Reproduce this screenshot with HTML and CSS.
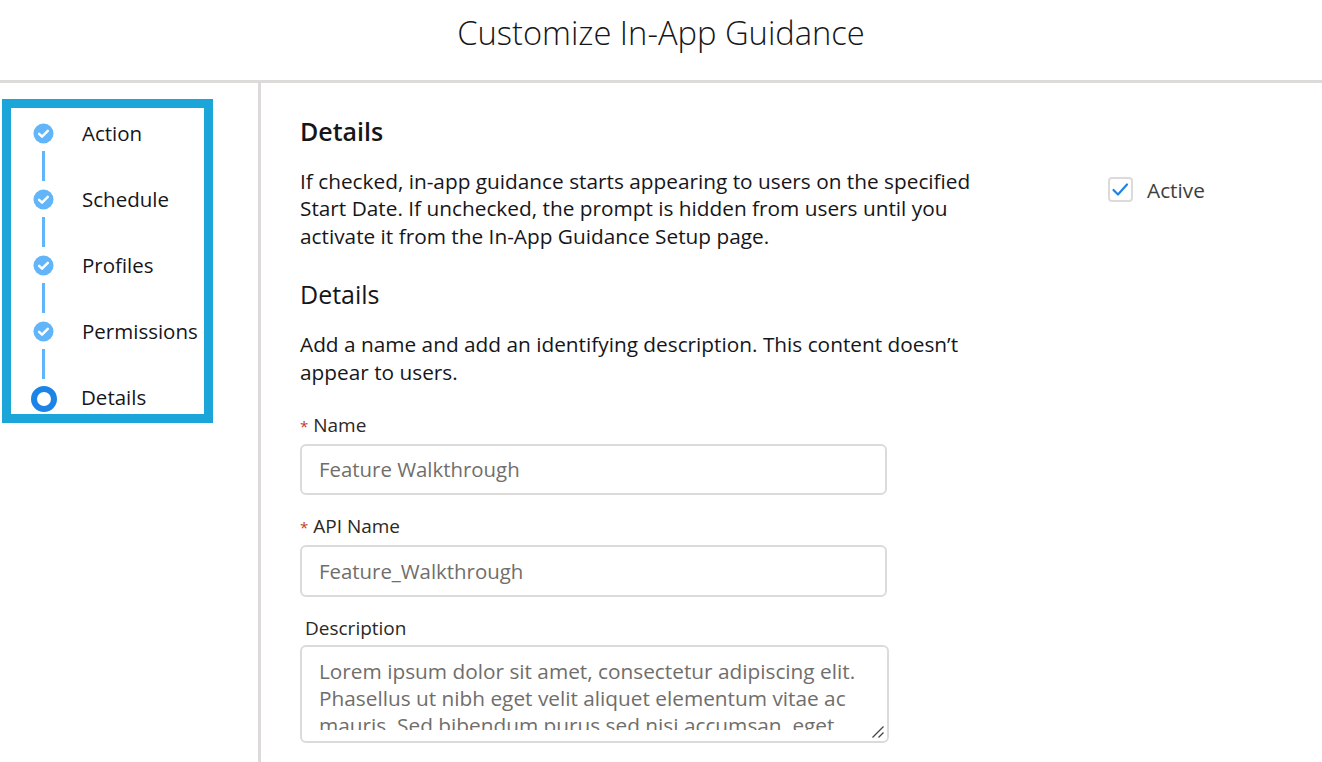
FILE: index.html
```html
<!DOCTYPE html>
<html lang="en">
<head>
    <meta charset="UTF-8">
    <title>Customize In-App Guidance</title>
    <link rel="stylesheet" href="styles.css">
</head>
<body>
    <header class="page-header">
        <h1>Customize In-App Guidance</h1>
    </header>
    <div class="layout">
        <aside class="sidebar">
            <ol class="steps">
                <li class="step">
                    <svg class="step-icon" viewBox="0 0 22 22"><circle cx="11" cy="11" r="10.5" fill="#62b5f9"/><path d="M6.4 11.3l3.1 3 6-6" fill="none" stroke="#fff" stroke-width="2.6" stroke-linecap="round" stroke-linejoin="round"/></svg>
                    <span>Action</span>
                </li>
                <li class="step">
                    <svg class="step-icon" viewBox="0 0 22 22"><circle cx="11" cy="11" r="10.5" fill="#62b5f9"/><path d="M6.4 11.3l3.1 3 6-6" fill="none" stroke="#fff" stroke-width="2.6" stroke-linecap="round" stroke-linejoin="round"/></svg>
                    <span>Schedule</span>
                </li>
                <li class="step">
                    <svg class="step-icon" viewBox="0 0 22 22"><circle cx="11" cy="11" r="10.5" fill="#62b5f9"/><path d="M6.4 11.3l3.1 3 6-6" fill="none" stroke="#fff" stroke-width="2.6" stroke-linecap="round" stroke-linejoin="round"/></svg>
                    <span>Profiles</span>
                </li>
                <li class="step">
                    <svg class="step-icon" viewBox="0 0 22 22"><circle cx="11" cy="11" r="10.5" fill="#62b5f9"/><path d="M6.4 11.3l3.1 3 6-6" fill="none" stroke="#fff" stroke-width="2.6" stroke-linecap="round" stroke-linejoin="round"/></svg>
                    <span>Permissions</span>
                </li>
                <li class="step step-current">
                    <span class="step-ring"></span>
                    <span>Details</span>
                </li>
            </ol>
        </aside>
        <main class="content">
            <h2 class="section-title">Details</h2>
            <div class="intro-row">
                <p class="text intro-text">If checked, in-app guidance starts appearing to users on the specified Start Date. If unchecked, the prompt is hidden from users until you activate it from the In-App Guidance Setup page.</p>
                <label class="active-toggle">
                    <span class="checkbox">
                        <svg viewBox="0 0 25 25" width="25" height="25"><path d="M5.500 13l4.500 4.500 9-10" fill="none" stroke="#1b84e6" stroke-width="2.200" stroke-linecap="round" stroke-linejoin="round"/></svg>
                    </span>
                    Active
                </label>
            </div>
            <h3 class="sub-title">Details</h3>
            <p class="text sub-text">Add a name and add an identifying description. This content doesn’t appear to users.</p>

            <div class="field field-name">
                <label class="field-label"><span class="required">*</span> Name</label>
                <div class="input input-first">Feature Walkthrough</div>
            </div>
            <div class="field field-api">
                <label class="field-label"><span class="required">*</span> API Name</label>
                <div class="input input-tall">Feature_Walkthrough</div>
            </div>
            <div class="field field-desc">
                <label class="field-label desc-label">Description</label>
                <div class="textarea">
                    <div class="textarea-text">Lorem ipsum dolor sit amet, consectetur adipiscing elit. Phasellus ut nibh eget velit aliquet elementum vitae ac mauris. Sed bibendum purus sed nisi accumsan, eget</div>
                    <svg class="grip" viewBox="0 0 14 14" width="14" height="14"><path d="M1.500 12.500L12.500 1.500M7.500 12.500L12.500 7.500" fill="none" stroke="#444" stroke-width="1.300"/></svg>
                </div>
            </div>
        </main>
    </div>
</body>
</html>
```
FILE: styles.css
```css
* {
    box-sizing: border-box;
}

html, body {
    height: 100%;
}

body {
    margin: 0;
    background: #fff;
    color: #16161a;
    font-family: "Open Sans", sans-serif;
    overflow: hidden;
}

.page-header {
    height: 83px;
    border-bottom: 3px solid #dddbda;
    display: flex;
    justify-content: center;
    padding-top: 11px;
}

.page-header h1 {
    margin: 0;
    font-size: 32.700px;
    font-weight: 300;
    line-height: 44px;
}

.layout {
    display: flex;
    height: 679px;
}

.sidebar {
    width: 261px;
    flex: none;
    border-right: 3px solid #dddbda;
    padding: 16px 0 0 2px;
}

.steps {
    list-style: none;
    margin: 0;
    width: 211px;
    height: 324px;
    border: 9px solid #1ba5d8;
    padding: 0;
}

.step {
    position: relative;
    display: flex;
    align-items: center;
    height: 66px;
    font-size: 20.500px;
    padding-left: 19px;
}

.step:first-child {
    margin-top: -8px;
}

.step span:last-child {
    margin-left: 28px;
}

.step-icon {
    width: 21px;
    height: 21px;
    flex: none;
    margin-left: 3px;
}

/* connector between two steps */
.step:not(:last-child)::after {
    content: "";
    position: absolute;
    left: 31px;
    top: 51px;
    width: 3px;
    height: 30px;
    background: #62b5f9;
}

.step-ring {
    width: 26px;
    height: 26px;
    flex: none;
    margin: 4px 0 0 1px;
    border: 6px solid #1b84e6;
    border-radius: 50%;
    background: #fff;
}

.step-current span:last-child {
    margin-left: 24px;
}

.content {
    flex: 1;
    padding: 32px 0 0 39px;
}

.section-title {
    margin: 0;
    font-size: 25px;
    font-weight: 600;
    line-height: 33px;
}

.intro-row {
    display: flex;
    margin-top: 20px;
}

.text {
    margin: 0;
    font-size: 20.800px;
    line-height: 27.400px;
}

.intro-text {
    width: 690px;
    flex: none;
}

.active-toggle {
    display: flex;
    align-items: center;
    gap: 14px;
    height: 25px;
    margin: -5px 0 0 118px;
    font-size: 20.800px;
    color: #3e3e3c;
    padding-top: 14px;
    box-sizing: content-box;
}

.checkbox {
    width: 25px;
    height: 25px;
    flex: none;
    border: 2px solid #dddbda;
    border-radius: 4px;
    display: flex;
    align-items: center;
    justify-content: center;
}

.checkbox svg {
    flex: none;
}

.sub-title {
    margin: 27px 0 0;
    font-size: 25px;
    font-weight: 400;
    line-height: 34px;
}

.sub-text {
    width: 690px;
    margin-top: 20px;
}

.field {
    width: 587px;
}

.field-name {
    margin-top: 26px;
}

.field-api {
    margin-top: 18px;
}

.field-desc {
    margin-top: 18px;
    width: 589px;
}

.field-label {
    display: block;
    font-size: 19px;
    line-height: 26px;
    color: #2b2826;
    margin-bottom: 5px;
}

.required {
    color: #c23934;
    font-size: 15px;
}

.desc-label {
    padding-left: 5px;
    margin-bottom: 4px;
}

.input {
    height: 51px;
    border: 2px solid #dddbda;
    border-radius: 6px;
    padding: 0 17px;
    font-size: 20.400px;
    line-height: 49px;
    color: #706e6b;
}

.input-first {
    line-height: 47px;
}

.input-tall {
    height: 52px;
}

.textarea {
    position: relative;
    height: 98px;
    border: 2px solid #dddbda;
    border-radius: 6px;
    padding: 11px 17px 0;
}

.textarea-text {
    height: 72px;
    overflow: hidden;
    font-size: 20.800px;
    line-height: 27px;
    color: #706e6b;
}

.grip {
    position: absolute;
    right: 2px;
    bottom: 2px;
}
```
